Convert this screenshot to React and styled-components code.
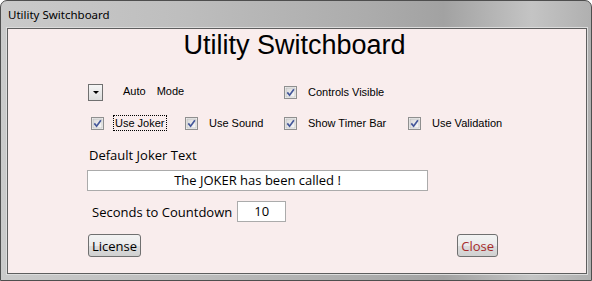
import styled, { createGlobalStyle } from "styled-components";

const Global = createGlobalStyle`
    html, body {
        margin: 0;
        padding: 0;
        background: #ffffff;
        overflow: hidden;
    }
`;

const Ventana = styled.div`
    box-sizing: border-box;
    width: 592px;
    height: 281px;
    display: flex;
    flex-direction: column;
    border: 1px solid #4e4e4e;
    border-radius: 7px 7px 0 0;
    background: linear-gradient(to right, #cacaca 0%, #bebebe 30%, #acacac 62%, #a2a2a2 75%, #c4c4c4 90%, #b0b0b0 100%);
`;

const BarraTitulo = styled.div`
    height: 27px;
    display: flex;
    align-items: center;
    padding-left: 7px;
    font-family: "Noto Sans", "Open Sans", sans-serif;
    font-size: 11.5px;
    color: #000;
`;

const Panel = styled.div`
    flex: 1;
    margin: 0 4px 6px 6px;
    border: 1px solid #5e5e5e;
    box-shadow: 0 0 0 1px #dcdcdc;
    background: #f9eded;
    display: flex;
    flex-direction: column;
`;

const Titulo = styled.h1`
    margin: 3px 5px 0 0;
    font-family: "Liberation Sans", Arial, sans-serif;
    font-weight: normal;
    font-size: 27px;
    line-height: 27px;
    text-align: center;
    color: #000;
`;

const Opciones = styled.div`
    display: grid;
    grid-template-columns: 94px 99px 124px auto;
    grid-template-rows: 20px 20px;
    row-gap: 11px;
    margin-top: 23px;
    padding-left: 83px;
    font-family: "Liberation Sans", Arial, sans-serif;
    font-size: 11px;
    color: #000;
`;

const Celda = styled.div`
    display: flex;
    align-items: center;
    margin-left: ${(p) => (p.$desplazar ? -3 : 0)}px;
    grid-column: ${(p) => p.$col};
    grid-row: ${(p) => p.$fila};
`;

const Desplegable = styled.div`
    box-sizing: border-box;
    width: 15px;
    height: 17px;
    border: 1px solid #707070;
    background: linear-gradient(#f6f6f6, #dddddd);
    display: flex;
    align-items: center;
    justify-content: center;
    margin-right: 20px;

    &::after {
        content: "";
        border-left: 3px solid transparent;
        border-right: 3px solid transparent;
        border-top: 3px solid #000;
    }
`;

const TextoModo = styled.span`
    margin-right: ${(p) => p.$espacio || 0}px;
    margin-top: -3px;
`;

const Etiqueta = styled.span`
    margin-left: 9px;
    padding: 1px 1px;
    border: 1px dotted ${(p) => (p.$foco ? "#000" : "transparent")};
    white-space: nowrap;
`;

const Casilla = () => (
    <svg width="13" height="13" viewBox="0 0 13 13">
        <defs>
            <linearGradient id="fondoCasilla" x1="0" y1="0" x2="1" y2="1">
                <stop offset="0" stopColor="#d8d8d8" />
                <stop offset="1" stopColor="#fbfbfb" />
            </linearGradient>
        </defs>
        <rect x="0.5" y="0.5" width="12" height="12" fill="#f4f4f4" stroke="#8f8f8f" />
        <rect x="2" y="2" width="9" height="9" fill="url(#fondoCasilla)" stroke="#b4b4b4" strokeWidth="0.6" />
        <path d="M3.3 6.4 L5.6 9.2 L9.9 3.3" fill="none" stroke="#44579a" strokeWidth="1.7" />
    </svg>
);

const Opcion = ({ col, fila, texto, foco }) => (
    <Celda $col={col} $fila={fila}>
        <Casilla />
        <Etiqueta $foco={foco}>{texto}</Etiqueta>
    </Celda>
);

const Formulario = styled.div`
    display: flex;
    flex-direction: column;
    align-items: flex-start;
    padding-left: 79px;
    margin-top: 13px;
    font-family: "Open Sans", "Noto Sans", sans-serif;
    font-size: 13px;
    color: #000;
`;

const Rotulo = styled.div`
    margin-left: 2px;
    line-height: 18px;
`;

const Campo = styled.div`
    box-sizing: border-box;
    width: ${(p) => p.$ancho}px;
    height: 21px;
    margin-top: ${(p) => p.$arriba || 0}px;
    background: #fff;
    border: 1px solid #ababab;
    display: flex;
    align-items: center;
    justify-content: center;
    line-height: 19px;
`;

const FilaCuenta = styled.div`
    display: flex;
    align-items: center;
    gap: 5px;
    margin-top: 10px;
    padding-left: 5px;
`;

const FilaBotones = styled.div`
    display: flex;
    justify-content: space-between;
    margin-top: 12px;
    padding: 0 88px 0 80px;
`;

const Boton = styled.button`
    box-sizing: border-box;
    height: 23px;
    padding: 0 3px;
    border: 1px solid #707070;
    border-radius: 3px;
    background: linear-gradient(#f3f3f3 0%, #ebebeb 50%, #dddddd 51%, #d0d0d0 100%);
    font-family: "Open Sans", "Noto Sans", sans-serif;
    font-size: 13px;
    line-height: 20px;
    color: ${(p) => p.$color || "#000"};
`;

const App = () => (
    <>
        <Global />
        <Ventana>
            <BarraTitulo>Utility Switchboard</BarraTitulo>
            <Panel>
                <Titulo>Utility Switchboard</Titulo>
                <Opciones>
                    <Celda $col={1} $fila={1} $desplazar>
                        <Desplegable />
                        <TextoModo $espacio={11}>Auto</TextoModo>
                        <TextoModo>Mode</TextoModo>
                    </Celda>
                    <Opcion col={3} fila={1} texto="Controls Visible" />
                    <Opcion col={1} fila={2} texto="Use Joker" foco />
                    <Opcion col={2} fila={2} texto="Use Sound" />
                    <Opcion col={3} fila={2} texto="Show Timer Bar" />
                    <Opcion col={4} fila={2} texto="Use Validation" />
                </Opciones>
                <Formulario>
                    <Rotulo>Default Joker Text</Rotulo>
                    <Campo $ancho={341} $arriba={6}>The JOKER has been called !</Campo>
                    <FilaCuenta>
                        <span>Seconds to Countdown</span>
                        <Campo $ancho={49}>10</Campo>
                    </FilaCuenta>
                </Formulario>
                <FilaBotones>
                    <Boton>License</Boton>
                    <Boton $color="#a62b2b">Close</Boton>
                </FilaBotones>
            </Panel>
        </Ventana>
    </>
);

export default App;
